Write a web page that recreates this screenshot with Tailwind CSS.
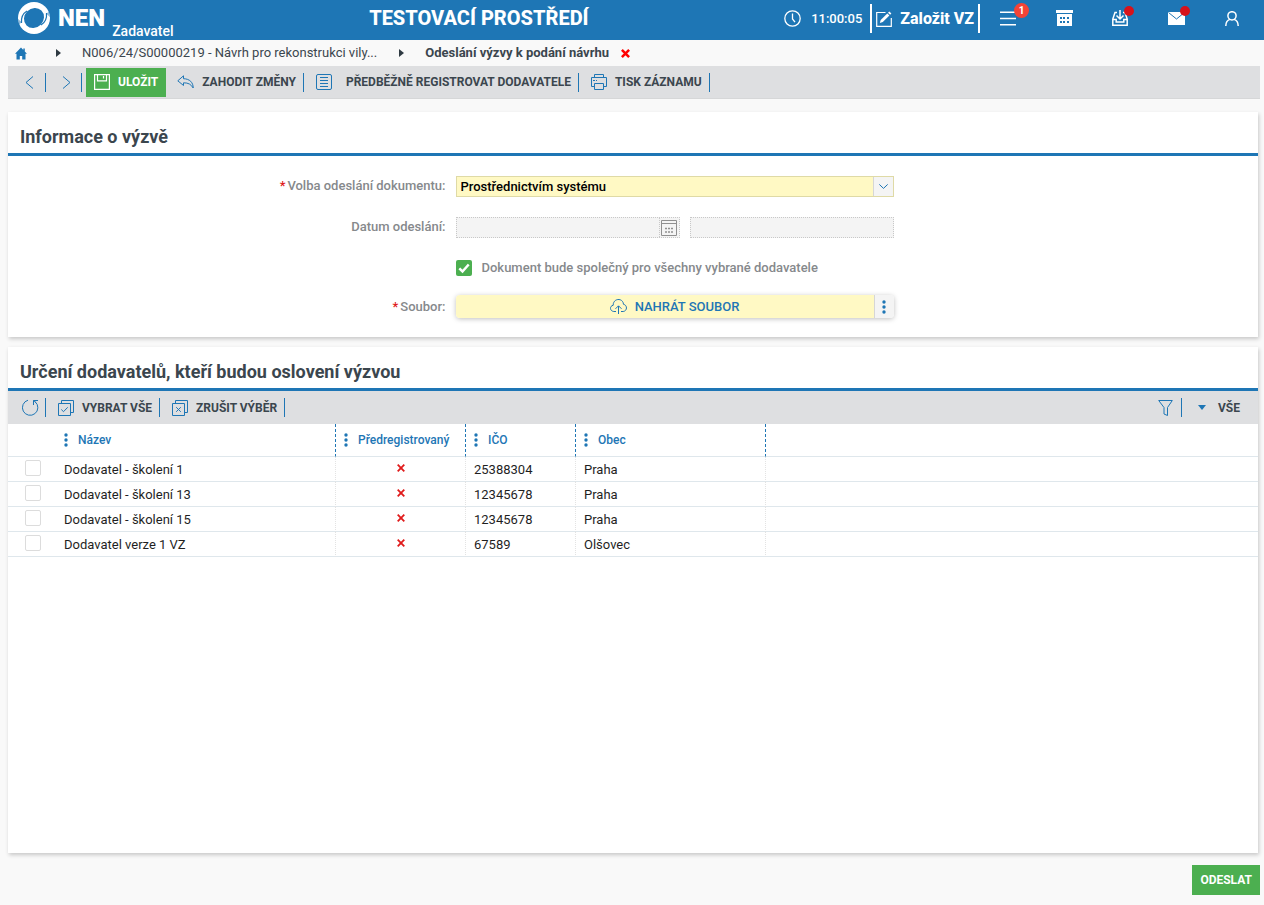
<!DOCTYPE html>
<html lang="cs">
<head>
    <meta charset="utf-8">
    <meta name="viewport" content="width=device-width, initial-scale=1">
    <title>NEN - Odeslání výzvy k podání návrhu</title>
    <script src="https://cdn.jsdelivr.net/npm/@tailwindcss/browser@4"></script>
</head>
<body class="min-h-screen flex flex-col bg-[#f9f9f9] font-['Roboto',sans-serif] text-[13px] leading-5 text-[#3b464e]">

<!-- Shared icons -->
<svg class="hidden">
    <symbol id="dots" viewBox="0 0 4 14">
        <circle cx="2" cy="2" r="1.7"/><circle cx="2" cy="7" r="1.7"/><circle cx="2" cy="12" r="1.7"/>
    </symbol>
    <symbol id="cross" viewBox="0 0 8 8">
        <path d="M.7.7 7.3 7.3M7.3.7.7 7.3" fill="none" stroke="currentColor" stroke-width="1.8"/>
    </symbol>
</svg>

<!-- Top bar -->
<header class="h-10 pl-[18px] pr-1 flex items-center bg-[#1e76b5] text-white">
    <a href="#" class="flex h-10 items-center">
        <svg class="size-8 mb-1" viewBox="0 0 32 32">
            <circle cx="16" cy="16" r="16" fill="#fff"/>
            <ellipse cx="16" cy="16" rx="10.500" ry="9.500" transform="rotate(-45 16 16)" fill="#1e76b5"/>
            <path d="M9 9C4 12 3 16 3.500 21M23 23c5-3 6-7 5.500-12" fill="none" stroke="#1e76b5" stroke-width="1.200"/>
            <path d="M0 17 3.500 20 1 23ZM32 15l-3.500-3L31 9Z" fill="#1e76b5" opacity=".5"/>
        </svg>
        <span class="ml-2 mb-1 text-2xl leading-8 font-black">NEN</span>
        <span class="ml-[7px] self-end text-sm leading-[18px] font-medium">Zadavatel</span>
    </a>
    <h1 class="flex-1 pb-1 text-center text-xl leading-6 font-extrabold">TESTOVACÍ PROSTŘEDÍ</h1>
    <div class="flex items-center gap-2.5 mr-2 mb-[3px] font-medium">
        <svg class="size-[17px]" viewBox="0 0 17 17" fill="none" stroke="#fff" stroke-width="1.300">
            <circle cx="8.500" cy="8.500" r="7.700"/><path d="M8.500 3.500v5.500l2.500 3.200"/>
        </svg>
        <time>11:00:05</time>
    </div>
    <button class="h-[29px] mb-[3px] px-1 flex items-center gap-2 border-x-2 border-white text-base font-extrabold">
        <svg class="size-4" viewBox="0 0 16 16" fill="none" stroke="#fff" stroke-width="1.200">
            <path d="M9.500 1.500H.7v13.800h14.600V7"/>
            <path d="m3.800 12 .9-3 6.600-6.600 2.100 2.100-6.600 6.600Z" fill="#fff" stroke="none"/>
            <path d="m12 1.700 1.300-1.300 2.100 2.100-1.300 1.300Z" fill="#fff" stroke="none"/>
        </svg>
        Založit VZ
    </button>
    <nav class="flex">
        <button class="relative w-14 h-10 pb-[3px] flex items-center justify-center" aria-label="Menu">
            <svg class="w-4 h-[15px]" viewBox="0 0 16 15" stroke="#fff" stroke-width="1.600"><path d="M0 1.200h16M0 7.500h16M0 13.800h16"/></svg>
            <span class="absolute left-[34px] top-[3px] size-[15px] rounded-full bg-[#f44336] text-[10px] leading-[15px] font-bold">1</span>
        </button>
        <button class="w-14 h-10 pb-1 flex items-center justify-center" aria-label="Kalendář">
            <svg class="w-[17px] h-4" viewBox="0 0 17 16" fill="#fff">
                <path d="M0 0h17v3H0ZM1 4h15v12H1Z"/>
                <path d="M4 7h2v2H4Zm3 0h2v2H7Zm4 0h2v2h-2Zm-7 4h2v2H4Zm3 0h2v2H7Zm4 0h2v2h-2Z" fill="#1e76b5"/>
            </svg>
        </button>
        <button class="relative w-14 h-10 pb-1 flex items-center justify-center" aria-label="Doručené">
            <svg class="size-4" viewBox="0 0 16 16" fill="none" stroke="#fff" stroke-width="1.500">
                <path d="M5 2.500H3L.8 9v6.200h14.400V9L13 2.500h-2M8 0v8.500M4.500 5.500 8 9l3.500-3.500M.7 9.500h3.500v2.500h7.600V9.500h3.500"/>
            </svg>
            <span class="absolute left-8 top-[6px] size-2.5 rounded-full bg-[#d8121a]"></span>
        </button>
        <button class="relative w-14 h-10 pb-[3px] flex items-center justify-center" aria-label="Zprávy">
            <svg class="w-[17px] h-[13px]" viewBox="0 0 17 13"><path d="M0 0h17v13H0Z" fill="#fff"/><path d="m.5.5 8 6.500 8-6.500" fill="none" stroke="#1e76b5"/></svg>
            <span class="absolute left-8 top-[6px] size-2.5 rounded-full bg-[#d8121a]"></span>
        </button>
        <button class="w-14 h-10 pb-[3px] flex items-center justify-center" aria-label="Uživatel">
            <svg class="w-[14px] h-[15px]" viewBox="0 0 14 15" fill="none" stroke="#fff" stroke-width="1.500">
                <circle cx="7" cy="4.800" r="4.100"/><path d="M.8 15c0-3.500 1.700-5.800 4.200-6.600M13.200 15c0-3.500-1.700-5.800-4.200-6.600"/>
            </svg>
        </button>
    </nav>
</header>

<!-- Breadcrumb -->
<nav class="h-[26px] pl-[15px] flex items-center" aria-label="Drobečková navigace">
    <a href="#" aria-label="Domů">
        <svg class="w-3 h-[13px]" viewBox="0 0 12 13" fill="#1e76b5"><path d="M6 .5 0 6.800h1.500v5.700h3.300V9h2.400v3.500h3.300V6.800H12L9.800 4.500V1.500H8.300V3Z"/></svg>
    </a>
    <svg class="ml-[29px] w-[5px] h-2" viewBox="0 0 5 8" fill="#2f3a42"><path d="M0 0v8l5-4Z"/></svg>
    <a href="#" class="ml-[21px]">N006/24/S00000219 - Návrh pro rekonstrukci vily...</a>
    <svg class="ml-[22px] w-[5px] h-2" viewBox="0 0 5 8" fill="#2f3a42"><path d="M0 0v8l5-4Z"/></svg>
    <span class="ml-[21px] font-bold">Odeslání výzvy k podání návrhu</span>
    <button class="ml-3 text-[#f00]" aria-label="Zavřít">
        <svg class="size-[9px]" viewBox="0 0 10 10" stroke="currentColor" stroke-width="2.800"><path d="m1 1 8 8M9 1 1 9"/></svg>
    </button>
</nav>

<!-- Record toolbar -->
<div class="ml-2 mr-1 h-[33px] pl-[17px] flex items-center border-b border-[#d6d7d8] bg-[#dedfe1] text-xs font-bold" role="toolbar">
    <button aria-label="Předchozí"><svg class="w-[9px] h-[13px]" viewBox="0 0 9 13" fill="none" stroke="#1e76b5"><path d="M8 .5 1 6.500l7 6"/></svg></button>
    <span class="ml-[11px] w-px h-[19px] bg-[#1e76b5]"></span>
    <button class="ml-4" aria-label="Další"><svg class="w-[9px] h-[13px]" viewBox="0 0 9 13" fill="none" stroke="#1e76b5"><path d="m1 .5 7 6-7 6"/></svg></button>
    <span class="ml-2.5 w-px h-[19px] bg-[#1e76b5]"></span>
    <button class="ml-1 h-[29px] px-2 flex items-center gap-2 bg-[#4caf50] text-white">
        <svg class="size-4" viewBox="0 0 16 16" fill="none" stroke="#fff" stroke-width="1.200"><path d="M.6.6h14.800v14.800H.6ZM3.500.6v6.200h9V.6M9.500 2v2.500"/></svg>
        ULOŽIT
    </button>
    <button class="px-[7px] ml-1 flex items-center gap-2">
        <svg class="w-[17px] h-[14px]" viewBox="0 0 17 14" fill="none" stroke="#1e76b5"><path d="M6.500.8.8 5.800l5.700 4.700V7.800c5 0 7.500 1.500 9.700 5.200 0-5.500-3.500-9.200-9.700-9.300Z"/></svg>
        ZAHODIT ZMĚNY
    </button>
    <span class="w-px h-[19px] bg-[#1e76b5]"></span>
    <button class="pl-3 pr-[7px] flex items-center gap-3.5">
        <svg class="size-4" viewBox="0 0 16 16" fill="none" stroke="#1e76b5"><rect x=".5" y=".5" width="15" height="15" rx="1.500"/><path d="M4 3.500h8M4 6.500h8M4 9.500h8M4 12.500h8"/></svg>
        PŘEDBĚŽNĚ REGISTROVAT DODAVATELE
    </button>
    <span class="w-px h-[19px] bg-[#1e76b5]"></span>
    <button class="pl-3 pr-[7px] flex items-center gap-2">
        <svg class="size-4" viewBox="0 0 16 16" fill="none" stroke="#1e76b5"><path d="M3.500 3.500v-3h9v3M3.500 12.500h-3v-9h15v9h-3M3.500 9.500h9v6h-9ZM2 6.500h2M5 6.500h1"/></svg>
        TISK ZÁZNAMU
    </button>
    <span class="w-px h-[19px] bg-[#1e76b5]"></span>
</div>

<main class="flex-1 flex flex-col gap-2.5 ml-2 mr-1.5 mt-[13px]">

    <!-- Call information -->
    <section class="bg-white shadow-[1px_2px_4px_rgba(0,0,0,0.2)]">
        <h2 class="h-11 px-3 pt-[13px] border-b-3 border-[#1e76b5] text-lg leading-6 font-bold">Informace o výzvě</h2>
        <form class="grid grid-cols-[35%_minmax(0,438px)] gap-x-2.5 gap-y-5 pt-5 pb-[19px] font-medium text-[#86898c]">
            <label for="send-type" class="flex justify-end gap-0.5"><span class="text-[#e01b1b]">*</span>Volba odeslání dokumentu:</label>
            <div class="relative h-[21px]">
                <select id="send-type" class="block w-full h-[21px] pl-1 pr-6 appearance-none border border-[#dfdaa6] bg-[#fff9c4] text-black">
                    <option>Prostřednictvím systému</option>
                </select>
                <span class="absolute right-px inset-y-px w-5 flex items-center justify-center border-l border-[#d6d6d6] bg-[#f4f4f4] pointer-events-none">
                    <svg class="w-[9px] h-[5px]" viewBox="0 0 9 5" fill="none" stroke="#1e76b5"><path d="m.3.4 4.200 4 4.200-4"/></svg>
                </span>
            </div>

            <label for="send-date" class="text-right">Datum odeslání:</label>
            <div class="flex gap-2.5 h-[21px]">
                <div class="flex flex-1 border border-dotted border-[#c8c8c8] bg-[#f4f4f4]">
                    <input id="send-date" type="text" disabled class="flex-1 min-w-0">
                    <button type="button" disabled class="w-5 flex items-center justify-center border-l border-dotted border-[#c8c8c8]" aria-label="Vybrat datum">
                        <svg class="size-4" viewBox="0 0 16 16" fill="none" stroke="#909090"><path d="M.5.5h15v15H.5ZM.5 3.500h15"/><path d="M4 8.500h8M4 12h8" stroke-width="1.500" stroke-dasharray="2 1"/></svg>
                    </button>
                </div>
                <input type="text" disabled aria-label="Čas odeslání" class="w-[204px] border border-dotted border-[#c8c8c8] bg-[#f4f4f4]">
            </div>

            <div class="col-start-2 h-5 -mb-[3px] flex items-center gap-2.5">
                <span class="relative size-4">
                    <input id="shared" type="checkbox" checked class="block size-4 appearance-none rounded-xs bg-[#4caf50]">
                    <svg class="absolute inset-0 size-4 pointer-events-none" viewBox="0 0 16 16" fill="none" stroke="#fff" stroke-width="2.500"><path d="m3.300 8.300 3.200 3.200 6.200-7"/></svg>
                </span>
                <label for="shared">Dokument bude společný pro všechny vybrané dodavatele</label>
            </div>

            <label for="upload" class="flex items-center justify-end gap-0.5"><span class="text-[#e01b1b]">*</span>Soubor:</label>
            <div class="flex h-[23px] rounded-sm overflow-hidden shadow-[0_1px_5px_rgba(0,0,0,0.25)] text-[#1e76b5]">
                <button id="upload" type="button" class="flex-1 pl-5 flex items-center justify-center gap-2 bg-[#fff9c4]">
                    <svg class="w-[17px] h-[15px]" viewBox="0 0 17 15" fill="none" stroke="#1e76b5"><path d="M6 12.500H3.800C-.5 12-.5 6.800 3.200 6.300 3-1 13-1.500 13.500 5.300c4 .7 4 6.700-.3 7.200H11M8.500 15V7M5.500 9.800l3-3 3 3"/></svg>
                    NAHRÁT SOUBOR
                </button>
                <button type="button" class="w-5 flex items-center justify-center border-l border-[#d6d6d6] bg-[#f4f4f4]" aria-label="Další akce">
                    <svg class="w-1 h-3.5" fill="#1e76b5"><use href="#dots"/></svg>
                </button>
            </div>
        </form>
    </section>

    <!-- Suppliers -->
    <section class="flex-1 bg-white shadow-[1px_2px_4px_rgba(0,0,0,0.2)]">
        <h2 class="h-11 px-3 pt-[13px] border-b-3 border-[#1e76b5] text-lg leading-6 font-bold">Určení dodavatelů, kteří budou oslovení výzvou</h2>
        <div class="h-[33px] pl-[14px] pr-[18px] flex items-center bg-[#dedfe1] text-xs font-bold" role="toolbar">
            <button aria-label="Obnovit">
                <svg class="w-[17px] h-[17px]" viewBox="0 0 17 17" fill="none" stroke="#1e76b5"><path d="M6 1.200A7.700 7.700 0 1 0 13.200 2.800M16 1.500h-4.500V6M11.500 1.500l2.500 2"/></svg>
            </button>
            <span class="ml-1.5 w-px h-[19px] bg-[#1e76b5]"></span>
            <button class="pl-3 pr-[7px] flex items-center gap-2">
                <svg class="size-4" viewBox="0 0 16 16" fill="none" stroke="#1e76b5"><path d="M.5 3.500h12v12H.5ZM3.500 3.500v-3h12v12h-3M3.300 9.500l2.200 2.200 4.200-4.400"/></svg>
                VYBRAT VŠE
            </button>
            <span class="w-px h-[19px] bg-[#1e76b5]"></span>
            <button class="pl-3 pr-[7px] flex items-center gap-2">
                <svg class="size-4" viewBox="0 0 16 16" fill="none" stroke="#1e76b5"><path d="M.5 3.500h12v12H.5ZM3.500 3.500v-3h12v12h-3M4.200 7.200l4.600 4.600M8.800 7.200l-4.600 4.600"/></svg>
                ZRUŠIT VÝBĚR
            </button>
            <span class="w-px h-[19px] bg-[#1e76b5]"></span>
            <button class="ml-auto" aria-label="Filtr">
                <svg class="w-[15px] h-4" viewBox="0 0 15 16" fill="none" stroke="#1e76b5"><path d="M.7.500h13.600L9.500 7.500v8l-3.500-1.500V7.500Z"/></svg>
            </button>
            <span class="ml-2 w-px h-[19px] bg-[#1e76b5]"></span>
            <button class="ml-4 flex items-center gap-3">
                <svg class="w-2 h-[5px]" viewBox="0 0 8 5" fill="#1e76b5"><path d="M0 0h8L4 5Z"/></svg>
                VŠE
            </button>
        </div>

        <table class="w-full table-fixed border-separate border-spacing-0 text-left text-[#1f1f1f] [&_td]:h-[25px] [&_td]:border-b [&_td]:border-b-[#dfe7ec] [&_th]:h-[33px] [&_th]:border-b [&_th]:border-b-[#dfe7ec]">
            <colgroup>
                <col class="w-12"><col class="w-[280px]"><col class="w-[130px]"><col class="w-[110px]"><col class="w-[190px]"><col>
            </colgroup>
            <thead class="text-xs leading-4 text-[#1e76b5] [&_th]:font-medium [&_div]:flex [&_div]:items-center [&_div]:gap-2.5 [&_div]:pl-2 [&_svg]:w-1 [&_svg]:h-3.5 [&_svg]:fill-[#1e76b5]">
                <tr>
                    <th></th>
                    <th class="border-r border-r-[#1e76b5] [border-right-style:dashed]"><div><svg><use href="#dots"/></svg>Název</div></th>
                    <th class="border-r border-r-[#1e76b5] [border-right-style:dashed]"><div><svg><use href="#dots"/></svg>Předregistrovaný</div></th>
                    <th class="border-r border-r-[#1e76b5] [border-right-style:dashed]"><div><svg><use href="#dots"/></svg>IČO</div></th>
                    <th class="border-r border-r-[#1e76b5] [border-right-style:dashed]"><div><svg><use href="#dots"/></svg>Obec</div></th>
                    <th></th>
                </tr>
            </thead>
            <tbody id="suppliers"></tbody>
        </table>
    </section>
</main>

<footer class="mt-3 mb-2.5 mr-1 flex justify-end">
    <button class="h-[30px] px-2 bg-[#4caf50] text-xs font-bold text-white">ODESLAT</button>
</footer>

<script>
    const suppliers = [
        ["Dodavatel - školení 1", "25388304", "Praha"],
        ["Dodavatel - školení 13", "12345678", "Praha"],
        ["Dodavatel - školení 15", "12345678", "Praha"],
        ["Dodavatel verze 1 VZ", "67589", "Olšovec"],
    ];
    document.getElementById("suppliers").innerHTML = suppliers.map(([name, ico, city]) => `
        <tr>
            <td><input type="checkbox" aria-label="${name}" class="block ml-[17px] mb-[3px] size-4 appearance-none rounded-xs border border-[#dcdcdc] bg-white"></td>
            <td class="pl-2 pt-0.5 border-r border-r-[#e3e3e3] [border-right-style:dotted]">${name}</td>
            <td class="border-r border-r-[#e3e3e3] [border-right-style:dotted]"><svg class="mx-auto mb-0.5 size-2 text-[#e01b1b]"><use href="#cross"/></svg></td>
            <td class="pl-2 pt-0.5 border-r border-r-[#e3e3e3] [border-right-style:dotted]">${ico}</td>
            <td class="pl-2 pt-0.5 border-r border-r-[#e3e3e3] [border-right-style:dotted]">${city}</td>
            <td></td>
        </tr>`).join("");
</script>
</body>
</html>
